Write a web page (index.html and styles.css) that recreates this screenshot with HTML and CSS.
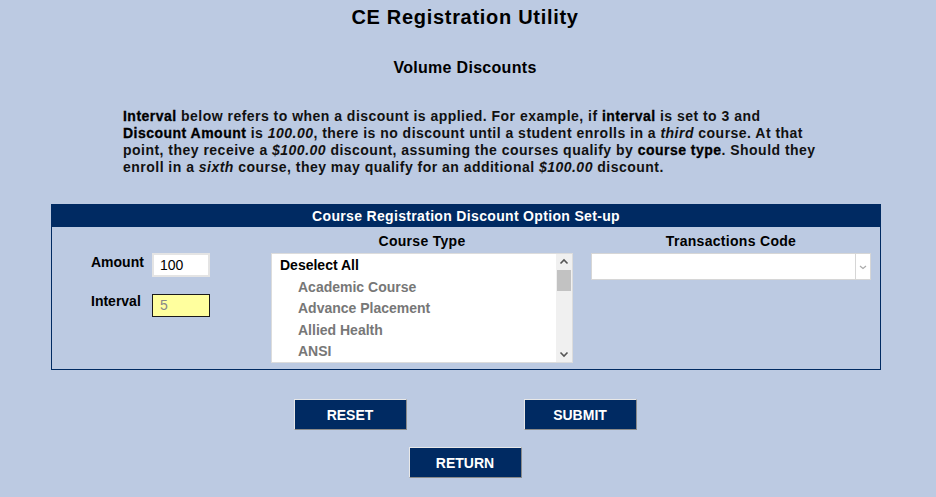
FILE: index.html
```
<!DOCTYPE html>
<html>
<head>
<meta charset="utf-8">
<link rel="stylesheet" href="styles.css">
</head>
<body>
<div class="page">
  <h1 class="title">CE Registration Utility</h1>
  <h2 class="subtitle">Volume Discounts</h2>
  <p class="intro"><b>Interval</b> below refers to when a discount is applied. For example, if <b>interval</b> is set to 3 and <b>Discount Amount</b> is <i>100.00</i>, there is no discount until a student enrolls in a <i>third</i> course. At that point, they receive a <i>$100.00</i> discount, assuming the courses qualify by <b>course type</b>. Should they enroll in a <i>sixth</i> course, they may qualify for an additional <i>$100.00</i> discount.</p>

  <div class="panel">
    <div class="panel-head">Course Registration Discount Option Set-up</div>
    <div class="panel-body">
      <div class="col-fields">
        <div class="field">
          <span class="label">Amount</span>
          <div class="input">100</div>
        </div>
        <div class="field">
          <span class="label label-up">Interval</span>
          <div class="input input-hl">5</div>
        </div>
      </div>
      <div class="col-type">
        <div class="col-title">Course Type</div>
        <div class="listbox">
          <div class="items">
            <div class="item item-all">Deselect All</div>
            <div class="item">Academic Course</div>
            <div class="item">Advance Placement</div>
            <div class="item">Allied Health</div>
            <div class="item">ANSI</div>
          </div>
          <div class="scrollbar">
            <svg class="arrow" width="16" height="16" viewBox="0 0 16 16"><path d="M4.5 9.5 L8 6 L11.5 9.5" fill="none" stroke="#555" stroke-width="1.6"/></svg>
            <div class="thumb"></div>
            <div class="track"></div>
            <svg class="arrow" width="16" height="16" viewBox="0 0 16 16"><path d="M4.5 6.5 L8 10 L11.5 6.5" fill="none" stroke="#555" stroke-width="1.6"/></svg>
          </div>
        </div>
      </div>
      <div class="col-code">
        <div class="col-title">Transactions Code</div>
        <div class="select">
          <div class="select-value"></div>
          <div class="select-btn"><svg width="14" height="14" viewBox="0 0 14 14"><path d="M4 6 L7 8.5 L10 6" fill="none" stroke="#aaa" stroke-width="1.2"/></svg></div>
        </div>
      </div>
    </div>
  </div>

  <div class="buttons">
    <div class="btn-row">
      <button class="btn">RESET</button>
      <button class="btn">SUBMIT</button>
    </div>
    <div class="btn-row">
      <button class="btn">RETURN</button>
    </div>
  </div>
</div>
</body>
</html>
```
FILE: styles.css
```
html, body {
  margin: 0;
  padding: 0;
  background: #bccae2;
}
body {
  font-family: "Liberation Sans", Arial, sans-serif;
  color: #000;
}
.page {
  width: 930px;
  height: 497px;
  overflow: hidden;
}
.title {
  margin: 5px 0 0;
  font-size: 20px;
  line-height: 24px;
  font-weight: bold;
  text-align: center;
  letter-spacing: 0.7px;
}
.subtitle {
  margin: 29px 0 0;
  font-size: 16px;
  line-height: 20px;
  font-weight: bold;
  text-align: center;
  letter-spacing: 0.3px;
}
.intro {
  margin: 30px 0 0 123px;
  width: 700px;
  font-size: 14px;
  line-height: 17px;
  font-weight: bold;
  letter-spacing: 0.48px;
  color: #111;
}
.intro b {
  -webkit-text-stroke: 0.3px #000;
  color: #000;
}
.intro i { font-style: italic; }
.panel {
  margin: 28px 0 0 51px;
  width: 828px;
  border: 1px solid #002a62;
  height: 164px;
}
.panel-head {
  background: #002a62;
  color: #fff;
  font-weight: bold;
  font-size: 14px;
  line-height: 22px;
  height: 22px;
  text-align: center;
  letter-spacing: 0.33px;
}
.panel-body {
  display: flex;
}
.col-fields {
  width: 219px;
  padding: 26px 0 0 39px;
  box-sizing: border-box;
  display: flex;
  flex-direction: column;
  gap: 17px;
}
.field {
  display: flex;
  align-items: flex-start;
}
.label {
  width: 61px;
  font-size: 14px;
  font-weight: bold;
  line-height: 16px;
  padding-top: 1px;
}
.label-up {
  padding-top: 0;
  margin-top: -1px;
}
.input {
  width: 48px;
  height: 20px;
  background: #fff;
  border: 2px solid #e4e4e4;
  font-size: 14px;
  line-height: 20px;
  padding-left: 6px;
}
.input-hl {
  background: #ffff9e;
  border: 1px solid #1a1a1a;
  height: 21px;
  width: 49px;
  padding-left: 7px;
  line-height: 21px;
  color: #888;
}
.col-type {
  width: 302px;
}
.col-title {
  font-size: 14px;
  font-weight: bold;
  text-align: center;
  line-height: 16px;
  padding-top: 6px;
  height: 21px;
  box-sizing: border-box;
  margin-bottom: 5px;
  letter-spacing: 0.3px;
}
.listbox {
  display: flex;
  width: 302px;
  height: 110px;
  box-sizing: border-box;
  border: 1px solid #dcdcdc;
  background: #fff;
}
.items {
  flex: 1;
  padding-top: 1px;
}
.item {
  font-size: 14px;
  font-weight: bold;
  color: #777;
  line-height: 21.5px;
  padding-left: 26px;
  white-space: nowrap;
}
.item-all {
  color: #000;
  padding-left: 8px;
}
.scrollbar {
  width: 16px;
  background: #f0f0f0;
  display: flex;
  flex-direction: column;
}
.arrow { display: block; }
.thumb {
  height: 21px;
  background: #c2c2c2;
  margin: 0 1px;
}
.track { flex: 1; }
.col-code {
  width: 280px;
  margin-left: 18px;
}
.select {
  display: flex;
  height: 27px;
  box-sizing: border-box;
  border: 1px solid #d6d6d6;
  background: #fff;
}
.select-value { flex: 1; }
.select-btn {
  width: 14px;
  border-left: 1px solid #d6d6d6;
  display: flex;
  align-items: center;
  justify-content: center;
}
.buttons {
  margin-top: 29px;
  display: flex;
  flex-direction: column;
  align-items: center;
  gap: 17px;
}
.btn-row {
  display: flex;
  gap: 117px;
  justify-content: center;
}
.btn {
  width: 113px;
  height: 31px;
  background: #002a62;
  color: #fff;
  font-family: "Liberation Sans", Arial, sans-serif;
  font-weight: bold;
  font-size: 14px;
  border: 1px solid;
  border-color: #e8e8e8 #8a8a8a #8a8a8a #e8e8e8;
  padding: 0;
  margin: 0;
}
```
